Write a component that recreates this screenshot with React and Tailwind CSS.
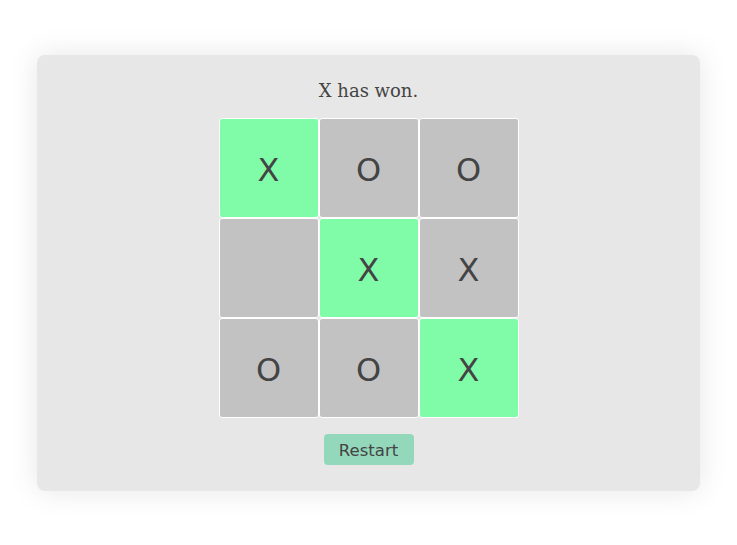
import React from "react";

const board = ["X", "O", "O", "", "X", "X", "O", "O", "X"];
const winLine = [0, 4, 8];

const App = () => {
  return (
    <div className="w-[737px] h-[545px] bg-white pt-[55px] pl-[37px]">
      <div className="w-[663px] h-[436px] rounded-lg bg-[#e7e7e7] shadow-[0_0_30px_rgba(0,0,0,0.1)] flex flex-col items-center">
        <h1 className="mt-[24px] h-[24px] leading-[24px] text-[18px] text-[#444] font-['DejaVu_Serif',serif]">
          X has won.
        </h1>
        <div className="mt-[15px] grid grid-cols-3 w-[300px]">
          {board.map((cell, i) => (
            <div
              key={i}
              className={
                "h-[100px] border border-white rounded-[3px] flex items-center justify-center pt-[4px] text-[32px] text-[#444] font-['DejaVu_Sans',sans-serif] " +
                (winLine.includes(i) ? "bg-[#80fca8]" : "bg-[#c2c2c2]")
              }
            >
              {cell}
            </div>
          ))}
        </div>
        <button className="mt-[16px] w-[90px] h-[31px] pt-[3px] rounded bg-[#94d8bc] text-[16.5px] text-[#444] font-['DejaVu_Sans',sans-serif]">
          Restart
        </button>
      </div>
    </div>
  );
};

export default App;
